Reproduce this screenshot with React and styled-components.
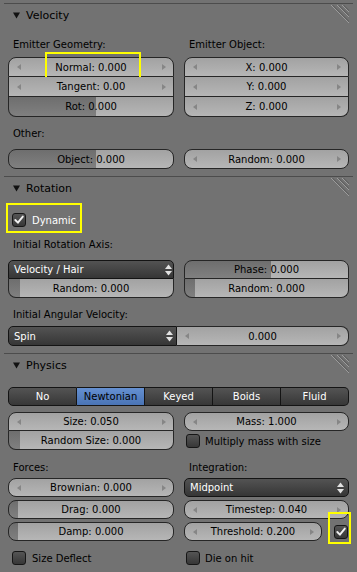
import React from 'react';
import styled, { createGlobalStyle, css } from 'styled-components';

const Global = createGlobalStyle`
  html, body { margin: 0; padding: 0; background: #727272; }
  body {
    font-family: "DejaVu Sans", "Liberation Sans", sans-serif;
    font-size: 10px;
    color: #000;
  }
  * { box-sizing: border-box; }
`;

const shape = (s, r) => {
  switch (s) {
    case 'top': return css`border-radius: ${r}px ${r}px 0 0;`;
    case 'mid': return css`border-radius: 0; border-top: none;`;
    case 'bottom': return css`border-radius: 0 0 ${r}px ${r}px; border-top: none;`;
    case 'left': return css`border-radius: ${r}px 0 0 ${r}px;`;
    case 'right': return css`border-radius: 0 ${r}px ${r}px 0; border-left: none;`;
    default: return css`border-radius: ${r}px;`;
  }
};

const Page = styled.div`
  width: 357px;
  min-height: 572px;
  padding: 3px 4px 0;
  background: #727272;
`;

const Panel = styled.section`
  border-top: 1px solid #4c4c4c;
  padding: 0 4px ${p => p.$pb || 0}px;
`;

const Header = styled.div`
  height: 23px;
  display: flex;
  align-items: center;
  padding-left: 5px;
  font-size: 11px;
  color: #000;
`;

const Title = styled.span`
  margin-left: 6px;
`;

const Grip = styled.svg`
  margin-left: auto;
  align-self: flex-start;
  margin-top: 1px;
  margin-right: 0;
`;

const Cols = styled.div`
  display: grid;
  grid-template-columns: 166px 165px;
  column-gap: 10px;
  align-items: start;
  margin-top: ${p => p.$mt || 0}px;
`;

const Col = styled.div`
  display: flex;
  flex-direction: column;
`;

const Label = styled.div`
  height: 16px;
  line-height: 16px;
  padding-left: 5px;
  margin-top: ${p => p.$mt || 0}px;
  margin-bottom: ${p => p.$mb || 0}px;
  white-space: nowrap;
`;

const NUM_BG = 'linear-gradient(#a2a2a2, #b6b6b6)';
const FILL_BG = 'linear-gradient(#6e6e6e, #808080)';

const Field = styled.div`
  position: relative;
  flex: ${p => (p.$grow ? '1 1 auto' : 'none')};
  height: ${p => p.$h || 20}px;
  margin-top: ${p => p.$mt || 0}px;
  display: flex;
  align-items: center;
  justify-content: center;
  border: 1px solid #262626;
  ${p => shape(p.$shape, 8)}
  background: ${p => (p.$fill != null
    ? `${FILL_BG} left top / ${p.$fill}px 100% no-repeat, ${NUM_BG}`
    : NUM_BG)};
  color: #000;
  white-space: nowrap;
  ${p => p.$arrows && css`
    &::before, &::after {
      content: '';
      position: absolute;
      top: 50%;
      margin-top: -3px;
      border-style: solid;
    }
    &::before {
      left: 8px;
      border-width: 3px 4px 3px 0;
      border-color: transparent #868686 transparent transparent;
    }
    &::after {
      right: 7px;
      border-width: 3px 0 3px 4px;
      border-color: transparent transparent transparent #868686;
    }
  `}
`;

const Menu = styled.div`
  position: relative;
  flex: none;
  width: ${p => (p.$w ? `${p.$w}px` : 'auto')};
  height: ${p => p.$h || 20}px;
  margin-top: ${p => p.$mt || 0}px;
  display: flex;
  align-items: center;
  padding: 0 ${p => p.$pr ?? 1}px 0 5px;
  border: 1px solid #141414;
  ${p => shape(p.$shape, 5)}
  background: linear-gradient(#535353, #363636);
  color: #fff;
  white-space: nowrap;
`;

const UpDown = styled.svg`
  margin-left: auto;
  flex: none;
`;

const Split = styled.div`
  display: flex;
  margin-top: ${p => p.$mt || 0}px;
`;

const Tabs = styled.div`
  display: flex;
  margin-top: ${p => p.$mt || 0}px;
`;

const Tab = styled.div`
  flex: 1 1 0;
  height: 19px;
  display: flex;
  align-items: center;
  justify-content: center;
  border: 1px solid #141414;
  border-left: none;
  background: ${p => (p.$active
    ? 'linear-gradient(#6590d1, #4a74b5)'
    : 'linear-gradient(#545454, #373737)')};
  color: ${p => (p.$active ? '#000' : '#fff')};
  &:first-child { border-left: 1px solid #141414; border-radius: 5px 0 0 5px; }
  &:last-child { border-radius: 0 5px 5px 0; }
`;

const CheckRow = styled.div`
  position: relative;
  display: flex;
  align-items: center;
  height: 20px;
  gap: ${p => p.$gap ?? 6}px;
  padding-left: ${p => p.$pl ?? 4}px;
  margin-top: ${p => p.$mt || 0}px;
  color: ${p => (p.$on ? '#fff' : '#000')};
  white-space: nowrap;
`;

const Box = styled.span`
  position: relative;
  flex: none;
  width: 14px;
  height: 14px;
  border: 1px solid #161616;
  border-radius: 3px;
  background: linear-gradient(#555555, #373737);
  display: flex;
  align-items: center;
  justify-content: center;
  margin-left: ${p => p.$ml || 0}px;
`;

const RowWithCheck = styled.div`
  display: flex;
  align-items: center;
  margin-top: ${p => p.$mt || 0}px;
`;

const Highlight = styled.span`
  position: absolute;
  left: ${p => p.$l}px;
  top: ${p => p.$t}px;
  width: ${p => p.$w}px;
  height: ${p => p.$h}px;
  border: 2px solid #ffff00;
  pointer-events: none;
`;

const Tri = () => (
  <svg width="7" height="7" viewBox="0 0 7 7">
    <polygon points="0,0.5 7,0.5 3.5,6.5" fill="#111" />
  </svg>
);

const GripIcon = () => (
  <Grip width="18" height="18" viewBox="0 0 18 18">
    {[0, 6, 11].map(k => (
      <g key={k}>
        <line x1={k} y1="0" x2="18" y2={18 - k} stroke="#9c9c9c" strokeWidth="1" />
        <line x1={k + 1.4} y1="0" x2="18" y2={16.6 - k} stroke="#585858" strokeWidth="1" />
      </g>
    ))}
  </Grip>
);

const UpDownIcon = () => (
  <UpDown width="7" height="12" viewBox="0 0 7 12">
    <polygon points="0,5 3.5,0.5 7,5" fill="#e2e2e2" />
    <polygon points="0,7 3.5,11.5 7,7" fill="#e2e2e2" />
  </UpDown>
);

const Check = () => (
  <svg width="12" height="12" viewBox="0 0 12 12">
    <path d="M2.3 6 L4.9 8.7 L9.8 2.6" fill="none" stroke="#f0f0f0" strokeWidth="1.9" strokeLinecap="round" strokeLinejoin="round" />
  </svg>
);

const PanelHeader = ({ title }) => (
  <Header>
    <Tri />
    <Title>{title}</Title>
    <GripIcon />
  </Header>
);

export default function App() {
  return (
    <Page>
      <Global />

      <Panel $pb={7}>
        <PanelHeader title="Velocity" />
        <Cols $mt={10}>
          <Col>
            <Label $mb={4}>Emitter Geometry:</Label>
            <Field $shape="top" $arrows>
              Normal: 0.000
              <Highlight $l={36} $t={-6} $w={96} $h={31} />
            </Field>
            <Field $shape="mid" $arrows>Tangent: 0.00</Field>
            <Field $shape="bottom" $fill={87}>Rot: 0.000</Field>
          </Col>
          <Col>
            <Label $mb={4}>Emitter Object:</Label>
            <Field $shape="top" $arrows>X: 0.000</Field>
            <Field $shape="mid" $arrows>Y: 0.000</Field>
            <Field $shape="bottom" $arrows>Z: 0.000</Field>
          </Col>
        </Cols>
        <Label $mt={9} $mb={7}>Other:</Label>
        <Cols>
          <Field $fill={87}>Object: 0.000</Field>
          <Field $arrows>Random: 0.000</Field>
        </Cols>
      </Panel>

      <Panel $pb={7}>
        <PanelHeader title="Rotation" />
        <CheckRow $mt={10} $on>
          <Box><Check /></Box>
          Dynamic
          <Highlight $l={-2} $t={-7} $w={76} $h={30} />
        </CheckRow>
        <Label $mt={7} $mb={7}>Initial Rotation Axis:</Label>
        <Cols>
          <Col>
            <Menu $shape="top" $h={19}>
              Velocity / Hair
              <UpDownIcon />
            </Menu>
            <Field $shape="bottom" $h={19} $fill={11}>Random: 0.000</Field>
          </Col>
          <Col>
            <Field $shape="top" $h={19} $fill={86}>Phase: 0.000</Field>
            <Field $shape="bottom" $h={19} $fill={10}>Random: 0.000</Field>
          </Col>
        </Cols>
        <Label $mt={9} $mb={3}>Initial Angular Velocity:</Label>
        <Split>
          <Menu $shape="left" $w={169} $pr={3}>
            Spin
            <UpDownIcon />
          </Menu>
          <Field $shape="right" $grow $arrows>0.000</Field>
        </Split>
      </Panel>

      <Panel $pb={4}>
        <PanelHeader title="Physics" />
        <Tabs $mt={10}>
          <Tab>No</Tab>
          <Tab $active>Newtonian</Tab>
          <Tab>Keyed</Tab>
          <Tab>Boids</Tab>
          <Tab>Fluid</Tab>
        </Tabs>
        <Cols $mt={6}>
          <Col>
            <Field $shape="top" $h={19} $arrows>Size: 0.050</Field>
            <Field $shape="bottom" $h={19} $fill={11}>Random Size: 0.000</Field>
          </Col>
          <Col>
            <Field $h={19} $arrows>Mass: 1.000</Field>
            <CheckRow $pl={2} $gap={5}>
              <Box />
              Multiply mass with size
            </CheckRow>
          </Col>
        </Cols>
        <Cols>
          <Col>
            <Label $mt={9} $mb={2}>Forces:</Label>
            <Field $h={19} $arrows>Brownian: 0.000</Field>
            <Field $h={19} $mt={3} $fill={9}>Drag: 0.000</Field>
            <Field $h={19} $mt={3} $fill={9}>Damp: 0.000</Field>
            <CheckRow $mt={7}>
              <Box />
              Size Deflect
            </CheckRow>
          </Col>
          <Col>
            <Label $mt={9} $mb={2}>Integration:</Label>
            <Menu $h={19} $pr={4}>
              Midpoint
              <UpDownIcon />
            </Menu>
            <Field $h={19} $mt={3} $arrows>Timestep: 0.040</Field>
            <RowWithCheck $mt={3}>
              <Field $h={19} $grow $arrows>Threshold: 0.200</Field>
              <Box $ml={12}>
                <Check />
                <Highlight $l={-7} $t={-14} $w={23} $h={32} />
              </Box>
              <span style={{ width: 1, flex: 'none' }} />
            </RowWithCheck>
            <CheckRow $mt={7} $pl={2} $gap={5}>
              <Box />
              Die on hit
            </CheckRow>
          </Col>
        </Cols>
      </Panel>
    </Page>
  );
}
